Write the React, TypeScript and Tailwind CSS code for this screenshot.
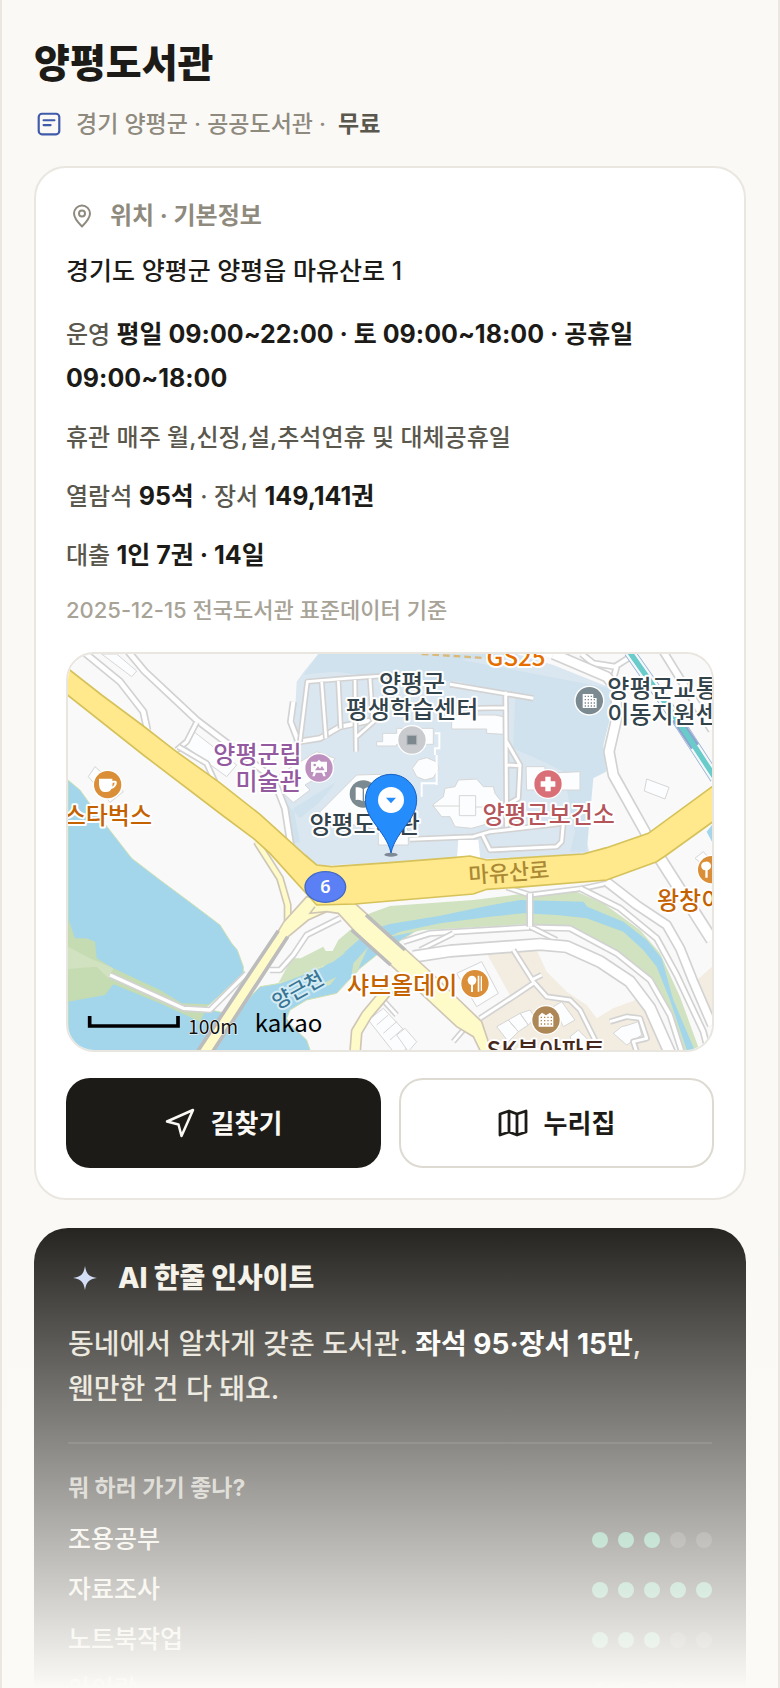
import React from "react";

const FONT = "font-[Inter,'Noto_Sans_CJK_KR',sans-serif]";

interface Activity {
  name: string;
  score: number;
}

const activities: Activity[] = [
  { name: "조용공부", score: 3 },
  { name: "자료조사", score: 5 },
  { name: "노트북작업", score: 3 },
  { name: "아이랑", score: 4 },
];

const Road = ({ d, w = 12, edge = 5, fill = "#ffffff", line = "#d2d2d2" }: { d: string; w?: number; edge?: number; fill?: string; line?: string }) => (
  <g fill="none" strokeLinejoin="round">
    <path d={d} stroke={line} strokeWidth={w + edge * 2} />
    <path d={d} stroke={fill} strokeWidth={w} />
  </g>
);

interface LabelProps {
  x: number;
  y: number;
  color: string;
  children: string;
  anchor?: "start" | "middle" | "end";
  size?: number;
  halo?: string;
  rotate?: number;
}

const Label = ({ x, y, color, children, anchor = "start", size = 72, halo = "#ffffff", rotate = 0 }: LabelProps) => (
  <text
    x={x}
    y={y}
    fill={color}
    stroke={halo}
    strokeWidth={12}
    strokeLinejoin="round"
    paintOrder="stroke"
    textAnchor={anchor}
    fontSize={size}
    fontWeight={500}
    fontFamily="'Noto Sans CJK KR', sans-serif"
    transform={rotate ? `rotate(${rotate} ${x} ${y})` : undefined}
  >
    {children}
  </text>
);

const Poi = ({ x, y, color, children }: { x: number; y: number; color: string; children: React.ReactNode }) => (
  <g transform={`translate(${x} ${y})`}>
    <circle r="45" fill="#fff" />
    <circle r="41" fill={color} />
    {children}
  </g>
);

const LibraryMap = () => (
  <svg viewBox="24 27 1932 1188" preserveAspectRatio="xMidYMid slice" className="block h-full w-full" role="img" aria-label="양평도서관 지도">
    <rect x="0" y="0" width="2000" height="1240" fill="#f9f9f9" />

    {/* river and banks */}
    <path d="M24 405L60 435L110 505L215 640L300 705L390 772L480 840L515 895L532 915L550 965V985L450 1078L430 1090L520 1110L600 1025L660 1015L790 965L850 915L930 855L990 837L1140 812L1000 900L950 930L900 970L830 1045L740 1065L690 1095L680 1120L690 1138L740 1185L752 1220H24Z" fill="#a3d6ea" stroke="#cfe0b4" strokeWidth="3" />
    <path d="M24 820L45 880L80 880L105 890L110 940L160 970L300 1035L365 1075L445 1078L420 1130L300 1075L160 1018L135 1050L24 1070Z" fill="#c5dbb2" />
    <path d="M24 905L90 940L160 970L145 1000L110 965L24 972Z" fill="#d0e2c0" />
    <path d="M655 1015L695 940H722L790 905L797 918H818L835 885L930 805L990 783L1240 765L1400 745L1550 740L1630 775L1740 855L1800 925L1860 1055L1920 1220H1860L1820 1095L1760 995L1670 925L1530 855L1410 837L1190 850L1090 855L990 875L900 890L820 950L700 1000Z" fill="#d0e2c0" />
    <path d="M850 925L930 855L990 837L1140 812L1280 783L1380 765L1570 770L1582 785L1690 830L1760 885L1805 940L1840 1065L1906 1220H1882L1830 1065L1790 965L1750 915L1690 860L1580 820L1490 810L1390 805L1290 815L1140 835L1020 860L930 900Z" fill="#a3d6ea" />
    <path d="M875 985L880 955L925 905L900 960L890 985ZM770 1025L830 995L810 1020Z" fill="#d0e2c0" />
    <path d="M1956 540L1940 560L1956 590Z" fill="#a3d6ea" />

    {/* public district */}
    <path d="M775 27L735 75L710 110L700 300L720 400L655 440L700 600L735 630L770 662L1590 628L1580 590L1595 390L1640 375L1625 320L1640 255L1655 130L1480 60L1370 27Z" fill="#dbe7f0" />
    <path d="M775 27L730 90L770 85L830 80L950 98L1200 110L1205 45L1375 27ZM1205 45L1650 130L1655 200L1630 300L1638 380L1600 400L1580 620H1530L1545 560L1510 380L1460 355L1360 310L1365 160L1200 110Z" fill="#d0e2ee" />
    <path d="M665 460L720 520L780 470L830 410L700 490L720 590L690 600Z" fill="#d0e2ee" />
    <path d="M1440 27L1655 100L1660 70L1520 27Z" fill="#fff" />

    {/* residential blocks */}
    <path d="M1280 925L1360 920L1430 915L1460 980L1520 1040L1580 1080L1610 1120L1660 1090L1740 1060L1810 1140L1820 1220H1270L1260 1130L1355 1060Z" fill="#f3ece0" />
    <path d="M1956 965L1905 1010L1956 1110Z" fill="#f3ece0" />

    {/* buildings */}
    <g fill="#fcfdfe" stroke="#d6d6d6" strokeWidth="3">
      <path d="M780 500L890 390L960 388L990 410L1045 560V600H955V555L780 520Z" />
      <path d="M1118 480L1150 455L1155 430L1185 425L1195 405L1250 402L1270 425H1300L1305 445L1340 490L1300 525L1270 540L1235 550L1185 545L1170 515H1145Z" />
      <path d="M1198 452H1247V512H1198ZM1118 483H1198M1247 486H1340" />
      <path d="M1057 370L1075 345L1100 338L1128 350L1137 370L1120 398L1095 405L1070 395Z" />
      <path d="M950 290H968V265H1010V250H1120V298H1010V303H950Z" />
      <path d="M1175 210H1305L1330 215V268L1280 265V252H1175Z" />
      <path d="M1398 365H1455V385L1560 380V435H1400Z" />
      <path d="M1760 402L1827 427L1815 462L1753 438Z" />
      <path d="M640 400L770 320L825 340L800 380L735 420L750 435L700 473L665 440Z" />
      <path d="M85 395L105 365L190 440L150 472Z" />
      <path d="M395 255L530 360L500 395L370 300Z" />
      <path d="M125 27H170L230 78L215 95Z" />
      <path d="M1190 985L1265 950L1315 1045L1250 1085Z" />
      <path d="M925 1125L970 1090L1060 1185L1030 1220H1000Z" />
      <path d="M950 1140L985 1110M970 1165L1010 1130M990 1185L1030 1150" />
      <path d="M1310 1145L1345 1125L1375 1160L1345 1190ZM1345 1125L1380 1105L1405 1140L1375 1160ZM1380 1105L1410 1095L1425 1120L1405 1140Z" />
      <path d="M1480 1085L1505 1070L1545 1125L1510 1145ZM1530 1175L1555 1155L1590 1190L1570 1220H1550Z" />
      <path d="M1660 1165L1685 1145L1705 1140L1735 1130L1745 1170L1700 1200Z" />
      <path d="M1010 1170L1035 1150L1070 1190L1045 1220ZM1905 640L1930 620L1956 650V680Z" />
    </g>

    {/* minor streets */}
    <Road d="M70 20L180 110L250 200L262 255" w={14} />
    <Road d="M205 20L255 80L410 225L640 400L675 490L692 600" w={14} />
    <Road d="M410 232L380 290L350 315" w={10} />
    <Road d="M355 305L440 355L465 410" w={10} />
    <Road d="M700 170L692 230L715 290L780 280L840 245L940 225" w={12} />
    <Road d="M720 290L742 110L860 100L1010 90L1040 110" w={8} />
    <Road d="M785 110L798 280M835 108L842 250M885 105L888 320M930 100L938 225M975 95V200L890 275" w={8} />
    <Road d="M1170 118L1420 160M1337 140L1340 560M1340 290L1380 360L1375 460L1340 480M1337 188L1240 190M1340 360L1380 362" w={9} />
    <Road d="M1050 583L1240 575L1290 560L1510 535L1505 590L1490 605L1290 615L1265 565" w={9} />
    <path d="M1195 585H1255L1262 650H1190Z" fill="#fff" />
    <path d="M1125 265H1138V310H1125V330M1130 330V420M1085 455V415H1128" fill="none" stroke="#fff" strokeWidth="6" />
    <Road d="M1565 27L1600 55L1665 65L1720 30M1670 65L1660 100" w={12} />
    <Road d="M1480 27L1640 95L1668 130L1670 220L1647 320L1660 390L1755 560L1770 600" w={26} />
    <Road d="M1810 20L1956 255" w={18} />
    <path d="M1085 27L1290 40" stroke="#d9b878" strokeWidth="7" strokeDasharray="20 12" fill="none" />
    <path d="M1708 20L1862 240L1966 400" stroke="#9ab3d2" strokeWidth="34" fill="none" />
    <path d="M1708 20L1862 240L1966 400" stroke="#f4f8fa" strokeWidth="29" fill="none" />
    <path d="M1848 220L1905 305" stroke="#8da4cf" strokeWidth="28" fill="none" />
    <path d="M1708 20L1862 240L1966 400" stroke="#69cccb" strokeWidth="16" fill="none" />
    <Road d="M1030 890L1110 865L1410 847L1530 850L1670 925L1770 1005L1830 1110L1865 1220" w={11} />
    <Road d="M1180 865L1080 915M1410 845L1490 885" w={9} />
    <Road d="M1060 935L1170 918L1440 898L1520 905L1620 950L1710 1010L1770 1090L1830 1225" w={30} />
    <Road d="M1340 727L1410 750L1570 730L1640 715" w={9} />
    <Road d="M1410 745V845" w={12} />
    <Road d="M1560 730L1680 790L1790 880L1850 990L1930 1160L1945 1220" w={12} />
    <Road d="M1640 710L1730 780L1820 840L1860 910L1900 1010L1956 1140" w={22} />
    <Road d="M1800 640L1956 885" w={30} />
    <Road d="M1360 915L1420 1010L1460 1055L1530 1065L1560 1095L1620 1215M1420 1015L1360 1055L1260 1120M1415 1005L1445 990" w={9} />
    <Road d="M1650 1130L1700 1115L1740 1120L1760 1180L1720 1190L1730 1220" w={9} />
    <Road d="M840 820L740 870L700 930L660 975L630 975" w={10} />
    <Road d="M150 990L370 1090L450 1095L560 985" w={10} />
    <Road d="M960 1055L1010 1110M1180 1190L1210 1155" w={8} />

    {/* local roads */}
    <Road d="M590 590L660 700L683 780V830" w={14} fill="#fffbc9" line="#cfc6b6" />
    <Road d="M1000 1015L920 1110L890 1160L885 1225" w={26} fill="#fffbc9" line="#cfc6b6" />
    <path d="M740 755L672 830L655 858L412 1220H458L685 875L745 825L800 800L835 805L885 860L1190 1145L1240 1175L1262 1220H1295L1265 1130L1105 975L885 775Z" fill="#fffbc9" stroke="#cfc6b6" strokeWidth="5" />
    <path d="M655 857L412 1220M683 875L458 1220M875 855L992 960M918 810L1035 915" stroke="#bcbcbc" strokeWidth="11" fill="none" />
    <path d="M765 785L750 805L800 800" fill="none" stroke="#cfc6b6" strokeWidth="5" />

    {/* main road */}
    <path d="M10 60L125 150L250 243L345 317L475 410L600 508L735 630L770 660L815 665L990 653L1180 638L1230 633L1280 645L1570 627L1640 608L1765 565L1970 415V522L1820 630L1790 650L1640 705L1370 727L1280 733L1240 747L990 768L885 777L770 780L630 625L580 580L490 513L250 330L10 140Z" fill="#ffe98c" stroke="#d6c25a" strokeWidth="5" />

    <ellipse cx="796" cy="726" rx="61" ry="46" fill="#5b80f5" stroke="#4269c6" strokeWidth="4" />
    <text x="796" y="745" textAnchor="middle" fill="#fff" fontSize="54" fontWeight="600" fontFamily="'Noto Sans', sans-serif">6</text>

    {/* places */}
    <Poi x={143} y={419} color="#d98e37">
      <path d="M-26 -18H14V-12H22Q29 -12 27 -2Q23 10 11 13Q7 22 -4 22H-10Q-24 20 -26 0ZM15 -6L14 6Q20 4 21 -6Z" fill="#fff" fillRule="evenodd" />
    </Poi>
    <Label x={276} y={537} color="#c46200" anchor="end">스타벅스</Label>

    <Poi x={777} y={369} color="#bd90c0">
      <path d="M-24 -19H-6L0 -25L6 -19H24V12H16L20 25H13L9 14H-9L-13 25H-20L-16 12H-24Z" fill="#fff" />
      <path d="M-12 7L-3 -5L3 2L9 -6L17 7Z" fill="#bd90c0" />
      <circle cx="-13" cy="-9" r="4" fill="#bd90c0" />
    </Poi>
    <Label x={725} y={355} color="#935a9f" anchor="end">양평군립</Label>
    <Label x={725} y={435} color="#935a9f" anchor="end">미술관</Label>

    <Poi x={1056} y={285} color="#c9cbcf">
      <rect x="-15" y="-14" width="29" height="28" fill="#7c888d" stroke="#aeb4b8" strokeWidth="3" />
    </Poi>
    <Label x={1056} y={142} color="#33434b" anchor="middle">양평군</Label>
    <Label x={1056} y={220} color="#33434b" anchor="middle">평생학습센터</Label>

    <Poi x={910} y={447} color="#7b8a90">
      <path d="M-23 -20Q-8 -22 -2 -15V22Q-10 15 -23 18ZM2 -15Q8 -22 23 -20V18Q10 15 2 22Z" fill="#fff" />
    </Poi>
    <Label x={914} y={563} color="#33434b" anchor="middle">양평도서관</Label>

    <Poi x={1464} y={417} color="#da7077">
      <path d="M-8 -22H8V-8H22V8H8V22H-8V8H-22V-8H-8Z" fill="#fff" />
    </Poi>
    <Label x={1466} y={535} color="#b4555a" anchor="middle">양평군보건소</Label>

    <Poi x={1588} y={167} color="#7b8a90">
      <path d="M-20 -20H12V-8H22V22H-20Z" fill="#fff" />
      <path d="M-14 -13H8M-14 -3H20M-14 7H20M-14 16H20" stroke="#7b8a90" strokeWidth="4" strokeDasharray="4 5" />
    </Poi>
    <Label x={1642} y={155} color="#33434b">양평군교통약자</Label>
    <Label x={1642} y={233} color="#33434b">이동지원센터</Label>

    <Label x={1368} y={63} color="#e66e00" anchor="middle">GS25</Label>
    <Label x={1227} y={715} color="#ab8934" halo="#ffe98c" rotate={-4} size={66}>마유산로</Label>

    <Poi x={1955} y={674} color="#d98e37">
      <path d="M-18 -24A13 13 0 0 1 -12 2V24H-19V2A13 13 0 0 1 -18 -24Z" fill="#fff" />
    </Poi>
    <Label x={1791} y={791} color="#c46200">왕창이네</Label>

    <Poi x={1245} y={1016} color="#d98e37">
      <ellipse cx="-9" cy="-10" rx="13" ry="14" fill="#fff" />
      <path d="M-12 0H-6V25H-12ZM8 -24H13V24H8ZM17 -22H21V22H17Z" fill="#fff" />
    </Poi>
    <Label x={1192} y={1046} color="#c46200" anchor="end">샤브올데이</Label>

    <Poi x={1458} y={1125} color="#ad8756">
      <path d="M-22 -12L-12 -22L0 -14L12 -22L22 -12V20H-22Z" fill="#fff" />
      <path d="M-16 -8H18M-16 2H18M-16 12H18" stroke="#ad8756" strokeWidth="4" strokeDasharray="4 6" />
    </Poi>
    <Label x={1458} y={1242} color="#46291c" anchor="middle">SK북아파트</Label>

    <Label x={652} y={1094} color="#397594" halo="#d5ecf5" size={60} rotate={-29}>양근천</Label>

    {/* marker */}
    <ellipse cx="993" cy="629" rx="20" ry="6" fill="#3d4b58" opacity="0.6" />
    <path d="M993 624C985 588 965 565 940 530C924 507 916 486 916 464A77 76 0 0 1 1070 464C1070 486 1062 507 1046 530C1021 565 1001 588 993 624Z" fill="#258cfc" stroke="#1560c4" strokeWidth="3" />
    <circle cx="993" cy="465" r="39" fill="#fff" />
    <path d="M978 458H1008L993 475Z" fill="#258cfc" />

    {/* scale and provider */}
    <path d="M89 1113V1143H354V1113" fill="none" stroke="#000" strokeWidth="11" />
    <text x="384" y="1166" fill="#111" stroke="#fff" strokeWidth="3" paintOrder="stroke" fontSize="58" fontFamily="'Noto Sans CJK KR', sans-serif">100m</text>
    <text x="584" y="1160" fill="#000" fontSize="72" fontFamily="'Noto Sans CJK KR', sans-serif">kakao</text>
  </svg>
);

const Score = ({ score }: { score: number }) => (
  <div className="flex gap-2.5" role="img" aria-label={`5점 중 ${score}점`}>
    {[1, 2, 3, 4, 5].map((n) => (
      <span key={n} className={`h-4 w-4 rounded-full ${n <= score ? "bg-[#54b28c]" : "bg-white/16"}`} />
    ))}
  </div>
);

const Strong = ({ children }: { children: React.ReactNode }) => <b className="text-[25px] font-bold leading-none text-[#1c1b17]">{children}</b>;

const App: React.FC = () => {
  return (
    <div className={`relative h-screen overflow-hidden border-x-2 border-[#e9e7df] bg-[#faf9f6] px-8 pt-8 text-[#1c1b17] ${FONT}`}>
      <header>
        <h1 className="text-[39px] font-extrabold leading-[62px]">양평도서관</h1>
        <div className="mt-3 flex h-9 items-center text-[23px] font-medium text-[#8f8a7e]">
          <svg viewBox="0 0 24 24" className="ml-0.5 mr-3.5 h-[26px] w-[26px]" fill="none" stroke="#3f5ba9" strokeWidth="2" strokeLinecap="round" strokeLinejoin="round">
            <rect x="2.5" y="2.5" width="19" height="19" rx="3" />
            <path d="M7 8.5h10M7 13h6.500" />
          </svg>
          <span>경기 양평군 · 공공도서관 ·</span>
          <b className="ml-3 font-bold text-[#5a574d]">무료</b>
        </div>
      </header>

      <section className="mt-6 rounded-[32px] border-2 border-[#e9e7df] bg-white p-[30px]">
        <h2 className="flex h-9 items-center text-2xl font-bold text-[#8f8a7e]">
          <svg viewBox="0 0 24 24" className="ml-1 mr-4 h-6 w-6" fill="none" stroke="currentColor" strokeWidth="2" strokeLinecap="round" strokeLinejoin="round">
            <path d="M12 22.500C8 18.500 4 14.500 4 9.500a8 8 0 0 1 16 0C20 14.500 16 18.500 12 22.500Z" />
            <circle cx="12" cy="9.500" r="3" />
          </svg>
          위치 · 기본정보
        </h2>
        <p className="mt-4 text-[25px] font-medium leading-[42px]">경기도 양평군 양평읍 마유산로 1</p>
        <div className="mt-[21px] flex flex-col gap-[15px] text-2xl font-medium leading-[44px] text-[#5a574d]">
          <p>
            운영 <Strong>평일 09:00~22:00 · 토 09:00~18:00 · 공휴일 09:00~18:00</Strong>
          </p>
          <p>휴관 매주 월,신정,설,추석연휴 및 대체공휴일</p>
          <p>
            열람석 <Strong>95석</Strong> · 장서 <Strong>149,141권</Strong>
          </p>
          <p>
            대출 <Strong>1인 7권 · 14일</Strong>
          </p>
        </div>
        <p className="mt-3.5 text-[22px] font-medium leading-[36px] text-[#a8a397]">2025-12-15 전국도서관 표준데이터 기준</p>

        <div className="mt-6 h-[400px] overflow-hidden rounded-[28px] border-2 border-[#e9e5df]">
          <LibraryMap />
        </div>

        <div className="mt-[26px] grid grid-cols-2 gap-[18px] text-[26px] font-bold">
          <button type="button" className="flex h-[90px] items-center justify-center gap-4 rounded-3xl bg-[#1c1b17] text-[#faf9f6]">
            <svg viewBox="0 0 30 30" className="h-[30px] w-[30px]" fill="none" stroke="currentColor" strokeWidth="2.500" strokeLinejoin="round">
              <path d="M28 2L16.500 28L13.500 16.500L2 13.500Z" />
            </svg>
            길찾기
          </button>
          <button type="button" className="flex h-[90px] items-center justify-center gap-4 rounded-3xl border-2 border-[#dddad1] bg-white">
            <svg viewBox="0 0 30 30" className="h-[30px] w-[30px]" fill="none" stroke="currentColor" strokeWidth="2.800" strokeLinejoin="round">
              <path d="M2 6L11 3L19 6L28 3V24L19 27L11 24L2 27ZM11 3V24M19 6V27" />
            </svg>
            누리집
          </button>
        </div>
      </section>

      <section className="mt-7 rounded-[34px] bg-[#1c1b17] p-[34px] text-[#f4f1e8]">
        <h2 className="flex h-8 items-center text-[28px] font-extrabold">
          <svg viewBox="0 0 24 24" className="ml-1 mr-5 h-[26px] w-[26px]" fill="#cdd8f6">
            <path d="M12 1C13.300 8.500 15.500 10.700 23 12C15.500 13.300 13.300 15.500 12 23C10.700 15.500 8.500 13.300 1 12C8.500 10.700 10.700 8.500 12 1Z" />
          </svg>
          AI 한줄 인사이트
        </h2>
        <p className="mt-7 text-[28px] font-medium leading-[45px] text-[#e5e1d6]">
          동네에서 알차게 갖춘 도서관. <b className="text-white">좌석 95·장서 15만</b>,<br />
          웬만한 건 다 돼요.
        </p>
        <div className="mt-[30px] border-t-2 border-white/10 pt-7">
          <h3 className="text-[23px] font-bold leading-[32px] text-[#bbb8ae]">뭐 하러 가기 좋나?</h3>
          <ul className="mt-[18px] flex flex-col gap-3.5">
            {activities.map((item) => (
              <li key={item.name} className="flex h-9 items-center justify-between text-[25px] font-medium">
                <span>{item.name}</span>
                <Score score={item.score} />
              </li>
            ))}
          </ul>
        </div>
      </section>

      {/* fade over the locked part */}
      <div className="pointer-events-none absolute inset-x-0 bottom-0 h-[480px] bg-linear-to-b from-[#fbfaf6]/0 to-[#fbfaf6]" />
    </div>
  );
};

export default App;
